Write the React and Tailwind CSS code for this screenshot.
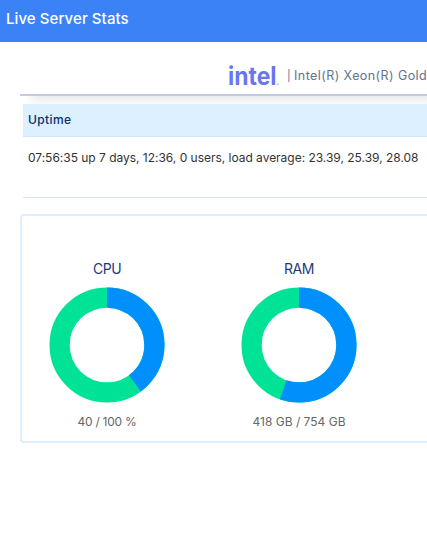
const gauges = [
  { key: "cpu", title: "CPU", label: "40 / 100 %", percent: 40, titleClass: "tracking-[-0.45px]", labelClass: "tracking-[-0.25px]" },
  { key: "ram", title: "RAM", label: "418 GB / 754 GB", percent: 55.4, titleClass: "tracking-[-0.45px]", labelClass: "tracking-[0px]" }
];

const Donut = ({ percent }) => (
  <svg width="116" height="116" viewBox="0 0 116 116" fill="none">
    <g transform="rotate(-90 58 58)" strokeWidth="20.2">
      <circle cx="58" cy="58" r="47.4" stroke="#00e396" />
      <circle
        cx="58"
        cy="58"
        r="47.4"
        stroke="#008ffb"
        pathLength="100"
        strokeDasharray={`${percent} ${100 - percent}`}
      />
    </g>
  </svg>
);

const IntelLogo = () => (
  <svg className="shrink-0" width="52" height="30" viewBox="0 0 52 30" fill="#6876f0">
    <text
      x="0"
      y="25"
      fontFamily="Inter, sans-serif"
      fontWeight="700"
      fontSize="25"
      textLength="48.5"
      lengthAdjust="spacingAndGlyphs"
    >
      intel
    </text>
    <circle cx="50" cy="24.2" r="0.8" opacity="0.7" />
  </svg>
);

const App = () => {
  return (
    <div className="h-[557px] w-[427px] overflow-hidden whitespace-nowrap bg-white font-['Inter',sans-serif]">
      <header className="flex h-[42px] items-center bg-[#3b82f6] pb-1 pl-1.5">
        <h1 className="text-[15px] font-medium tracking-[0.08px] text-white">Live Server Stats</h1>
      </header>

      <main className="pl-5">
        <div className="flex h-[54px] items-center border-b-2 border-[#c3cbdd] pl-[208px] pt-[14px] shadow-[10px_6px_10px_-2px_rgba(0,0,0,0.1)]">
          <IntelLogo />
          <div className="ml-[7px] flex items-center gap-[3px] pt-0.5 text-[12.5px] tracking-[0.42px] text-[#64748b]">
            <span className="text-[11px]">|</span>
            <span>Intel(R) Xeon(R) Gold</span>
          </div>
        </div>

        <section className="ml-[3px] mt-2">
          <div className="flex h-[33px] items-center border-b border-[#cfeafc] bg-[#dcf0ff] pl-[5px] text-xs font-medium tracking-[0.4px] text-[#082f68]">
            Uptime
          </div>
          <div className="h-[61px] border-b border-[#d3e8f7] pl-[5px] pt-3 text-[12px] leading-[18px] tracking-[-0.02px] text-[#333]">
            07:56:35 up 7 days, 12:36, 0 users, load average: 23.39, 25.39, 28.08
          </div>
        </section>

        <section className="mt-4 flex h-[229px] w-[600px] rounded-[4px] border-2 border-[#dcf0ff] pl-[5px] pt-[42px]">
          {gauges.map((g) => (
            <div key={g.key} className="mr-[32px] flex w-[160px] shrink-0 flex-col items-center">
              <h2 className={`text-sm leading-[22px] text-[#1e3a7a] ${g.titleClass}`}>{g.title}</h2>
              <div className="mt-[7px]">
                <Donut percent={g.percent} />
              </div>
              <p className={`mt-[10px] text-xs leading-[18px] text-[#666] ${g.labelClass}`}>{g.label}</p>
            </div>
          ))}
        </section>
      </main>
    </div>
  );
};

export default App;
